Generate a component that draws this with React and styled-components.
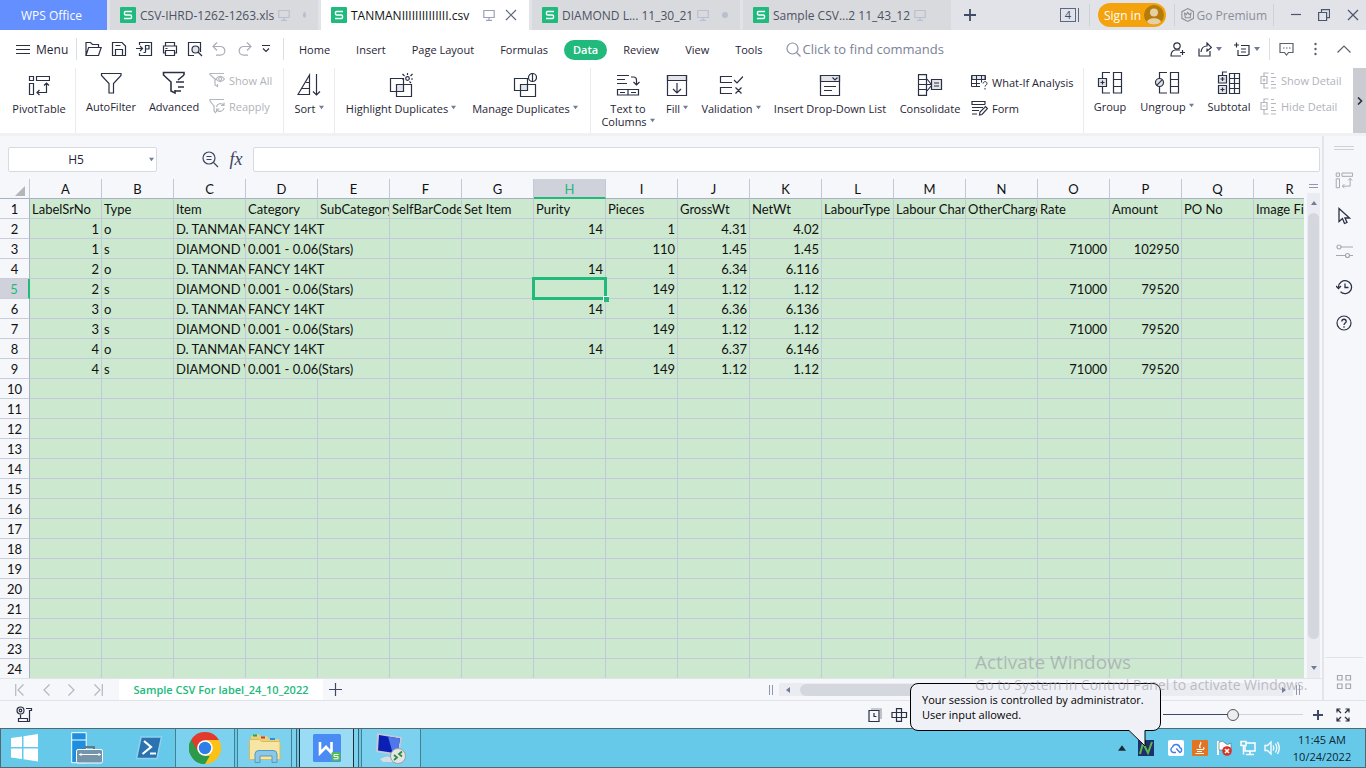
import styled, { createGlobalStyle, css } from 'styled-components';

const GlobalStyle = createGlobalStyle`
  *, *::before, *::after {
    box-sizing: border-box;
  }
  body {
    margin: 0;
    font-family: 'Open Sans', 'Noto Sans', sans-serif;
    font-size: 12px;
    color: #1f2536;
    background: #f5f7fa;
  }
  button, input {
    font: inherit;
    color: inherit;
    margin: 0;
    padding: 0;
    border: 0;
    background: none;
  }
  a {
    color: inherit;
    text-decoration: none;
  }
`;

/* ---------- icons ---------- */

const Svg = ({ w, h, color = '#2b3144', children }) => (
  <svg
    width={w}
    height={h}
    viewBox={`0 0 ${w} ${h}`}
    fill="none"
    stroke={color}
    strokeWidth="1.2"
    aria-hidden="true"
  >
    {children}
  </svg>
);

const SheetLogo = () => (
  <svg width="16" height="16" viewBox="0 0 16 16" fill="none" aria-hidden="true">
    <rect width="16" height="16" rx="1" fill="#1fba7d" />
    <path d="M12 4.5H5.5a1 1 0 0 0-1 1V7a1 1 0 0 0 1 1h5a1 1 0 0 1 1 1v1.5a1 1 0 0 1-1 1H4" stroke="#fff" strokeWidth="1.4" />
  </svg>
);

const MonitorIcon = ({ color = '#b9bfd0' }) => (
  <Svg w={12} h={12} color={color}>
    <path d="M.8 1.5h10.4v7H.8zM6 8.5V11M3 11.4h6" />
  </Svg>
);

const CloseIcon = ({ color = '#5e6780' }) => (
  <Svg w={12} h={12} color={color}>
    <path d="M1 1l10 10M11 1L1 11" />
  </Svg>
);

const PlusIcon = ({ size = 12, color = '#3f4a66', weight = 1.4 }) => (
  <Svg w={size} h={size} color={color}>
    <path d={`M${size / 2} 0v${size}M0 ${size / 2}h${size}`} strokeWidth={weight} />
  </Svg>
);

const HamburgerIcon = () => (
  <Svg w={14} h={11}>
    <path d="M0 1.5h14M0 5.5h14M0 9.5h14" strokeWidth="1" />
  </Svg>
);

const OpenIcon = () => (
  <Svg w={17} h={16}>
    <path d="M1 14.5v-13h4.5l2 2h6v3M1 14.5l2.6-8h12.6l-2.7 8z" />
  </Svg>
);

const SaveIcon = () => (
  <Svg w={16} h={16}>
    <path d="M1.5 1.5h9.5l3.5 3.5v9.5h-13zM4.5 14.5V8.5h7v6M4.5 4.5h5" />
  </Svg>
);

const ExportIcon = () => (
  <Svg w={17} h={16}>
    <path d="M3.5 4V1.5h12v13h-12V12M0 7.500h6M4 5l2.500 2.500L4 10M9.500 11.500v-7h3.500v3.500H9.500M7.500 11.500h2" />
  </Svg>
);

const PrintIcon = () => (
  <Svg w={16} h={16}>
    <path d="M3.5 5V1.500h9V5M3.500 12H1.500V5h13v7h-2M3.500 9.500h9v5h-9zM3.500 7.500h2" />
  </Svg>
);

const PreviewIcon = () => (
  <Svg w={16} h={16}>
    <path d="M7 14.5H1.500v-13h12V11" />
    <circle cx="8.5" cy="8.5" r="3.5" fill="#e3e5ea" />
    <path d="M11 11l4 4" />
  </Svg>
);

const UndoIcon = ({ flip }) => (
  <Svg w={16} h={14} color="#a9adb8">
    <g transform={flip ? 'matrix(-1 0 0 1 15 0)' : undefined}>
      <path d="M5 .5L1 4.5l4 4M1 4.5h7.500a4.300 4.300 0 0 1 0 8.700H4" />
    </g>
  </Svg>
);

const MoreIcon = () => (
  <Svg w={8} h={8}>
    <path d="M0 .5h8M1 3.500l3 3 3-3" />
  </Svg>
);

const SearchIcon = () => (
  <Svg w={15} h={15} color="#8b93a8">
    <circle cx="6.5" cy="6.5" r="5.5" />
    <path d="M10.5 10.5l4 4" />
  </Svg>
);

const PivotIcon = ({ size = 22, color = '#2b3144' }) => (
  <svg width={size} height={size} viewBox="0 0 22 22" fill="none" stroke={color} strokeWidth="1.2" aria-hidden="true">
    <path d="M1.5 2.5h4v4h-4zM8.5 2.5h13v4h-13zM1.5 9.5h4v11h-4zM9 18.5h9.500V9M16 11.5L18.500 9l2.500 2.500M11.500 16L9 18.500l2.500 2.500" />
  </svg>
);

const FilterIcon = () => (
  <Svg w={22} h={24}>
    <path d="M1.5 2.500h19.500v2l-7.500 8v9.500H9V12.500L1.500 4.500z" />
  </Svg>
);

const AdvancedFilterIcon = () => (
  <Svg w={24} h={24}>
    <path d="M22 4V1.500H1.500V4l7.500 7v9l4 2v-3M22 4l-6 5M14 11h8M16 16h6M13 20h6" strokeWidth="1.6" />
  </Svg>
);

const ShowAllIcon = () => (
  <Svg w={16} h={16} color="#b4b7bf">
    <path d="M7 8L1 2.500v-1h14M6 7v6l2.500 1.500V12M7 7c2.500-3.500 6-3.500 8.500 0-2.500 3.500-6 3.500-8.500 0z" />
    <circle cx="11.2" cy="7" r="1.5" />
  </Svg>
);

const ReapplyIcon = () => (
  <Svg w={16} h={16} color="#b4b7bf">
    <path d="M5 8L1 3V1.500h14M5 7v6l2 2M7.500 9a4 4 0 0 1 7-2M15 4.500v3h-3M15 10a4 4 0 0 1-7 2M7.500 14v-3h3" />
  </Svg>
);

const SortIcon = () => (
  <Svg w={24} h={24}>
    <path d="M1 21.500L12.500 2v19.500zM5 15.500h7.500M9 9.500h3.500M19.500 1v21M16 18.500l3.500 3.500 3.500-3.500" />
  </Svg>
);

const HighlightIcon = () => (
  <Svg w={24} h={24}>
    <path d="M8 12h7v6H8z" fill="#e3e5ea" stroke="none" />
    <path d="M1.5 5.5h13v13h-13zM7.5 11.500h15v12h-15z" />
    <circle cx="18.500" cy="5.500" r="1.800" fill="#fff" />
    <path d="M18.500 0v2M13.500 1l2 2M23.500 1l-2 2M22 6h2M13 6h2M22 10l-1.500-1.500" />
  </Svg>
);

const ManageIcon = () => (
  <Svg w={24} h={24}>
    <path d="M8 12h6v6H8z" fill="#e3e5ea" stroke="none" />
    <path d="M1.5 5.5h13v12h-13zM7.5 11.500h15v12h-15z" />
    <circle cx="19.5" cy="4.500" r="4" fill="#fff" />
    <path d="M19.500 .500v8" />
  </Svg>
);

const ColumnsIcon = () => (
  <Svg w={24} h={22}>
    <path d="M1 1.500h12M1 5.500h8M1 9.500h10M15 3h2.500a3 3 0 0 1 3 3v4M17.500 8l3 3 3-3M1.500 15.500h21v5.500h-21zM12 15.500v5.500M4 18.500h5M15 18.500h5" />
  </Svg>
);

const FillIcon = () => (
  <Svg w={22} h={23}>
    <path d="M1.500 1.500h19v5h-19z" fill="#e3e5ea" />
    <path d="M1.500 1.500h19v20h-19zM11 9v10M7 15l4 4 4-4" />
  </Svg>
);

const ValidationIcon = () => (
  <Svg w={24} h={20}>
    <path d="M13 1.500H1.500v6H13M13 12.500H1.500v6H13M15 5l3 3 6-6.500M16.500 12.500l6 6M22.500 12.500l-6 6" />
  </Svg>
);

const DropListIcon = () => (
  <Svg w={22} h={23}>
    <path d="M1.500 1.500h19v6h-19z" fill="#e3e5ea" />
    <path d="M1.500 1.500h19v20h-19zM13.500 3.500L16 6l2.500-2.500M5 12.500h12M5 16.500h8" />
  </Svg>
);

const ConsolidateIcon = () => (
  <Svg w={26} h={22}>
    <path d="M1.500 .600h8v20.800h-8zM1.500 5.500h8M1.500 10.500h8M1.500 15.500h8M10 5l4 5M10 17l4-5M10 10.500h4" />
    <path d="M14.500 5.500h10v10h-10z" fill="#e3e5ea" />
    <path d="M17 9h5M17 12h5" />
  </Svg>
);

const WhatIfIcon = () => (
  <svg width="17" height="16" viewBox="0 0 17 16" fill="none" stroke="#2b3144" aria-hidden="true">
    <path d="M1 1.500h13v4H1z" fill="#e3e5ea" />
    <path d="M14.500 6V1.500h-14v11H9M.500 5.500h14M.500 9.500H9M5.500 1.500v11M10.500 1.500v7M12 9.500c0-2.500 4-2.500 4 0 0 1.500-2 1.500-2 3M14 14v1.500" />
  </svg>
);

const FormIcon = () => (
  <Svg w={17} h={16}>
    <path d="M14 4.500v-3H1v3h13M1 7.500h11M1 10.500h7M1 14h5M8.500 15l.500-3 5.500-5.500 2 2L11 14.500z" />
  </Svg>
);

const GroupIcon = ({ ungroup }) => (
  <Svg w={26} h={24}>
    <path d="M16.500 1.500h8v20.500h-8zM16.500 8.500h8M16.500 15.500h8M13 1.500H5.500V7M5.500 16v6H13" />
    {ungroup ? (
      <>
        <circle cx="5.500" cy="11.500" r="4" fill="#e3e5ea" />
        <path d="M2.700 14.300l5.600-5.600" />
      </>
    ) : (
      <>
        <path d="M1.500 7.500h8v8h-8z" fill="#e3e5ea" />
        <path d="M5.500 9.500v4M3.500 11.500h4" />
      </>
    )}
  </Svg>
);

const SubtotalIcon = () => (
  <Svg w={24} h={24}>
    <path d="M12.500 2.500h10v20h-10zM17.500 2.500v20M12.500 7.500h10M12.500 12.500h10M12.500 17.500h10M10 1H5.500v3" />
    <path d="M1.500 4.500h8v7.500h-8zM1.500 14.500h8v8h-8z" fill="#e3e5ea" />
    <path d="M5.500 6v4M3.500 8h4M5.500 16.500v4M3.500 18.500h4" />
  </Svg>
);

const DetailIcon = ({ plus }) => (
  <Svg w={17} h={17} color="#b4b7bf">
    <path d="M8.500 1H4v3.500M4 11.500V16h4.500M1 4.500h6v7H1zM2.500 8h3M11 1.500h3M11 5.500h5M11 9.500h3M11 12.500h5M11 16h5" />
    {plus && <path d="M4 6.500v3" />}
  </Svg>
);

const AddUserIcon = () => (
  <Svg w={15} h={15}>
    <circle cx="7" cy="4" r="3.2" />
    <path d="M10 8H5c-3 .500-4 3-4 6h10M12.500 8v5M10 10.500h5" />
  </Svg>
);

const ShareIcon = () => (
  <Svg w={15} h={15}>
    <path d="M2 6.500v7.500h11V9M4 10c.500-4 3-6 6-6V1l4.500 4.500L10 9V6.500" />
  </Svg>
);

const NewNoteIcon = () => (
  <Svg w={16} h={14}>
    <path d="M7 3.500h8v9l-2 1H4V8M0 3h5M2.500 .500v5M7 7h5M7 10h5" />
  </Svg>
);

const CommentIcon = () => (
  <Svg w={15} h={14} color="#5a6070">
    <path d="M1 1.500h13v9H9.500l-2 2.500-2-2.500H1zM4 6h1.500M7 6h1.500M10 6h1.500" />
  </Svg>
);

const DotsIcon = () => (
  <svg width="3" height="14" viewBox="0 0 3 14" fill="#5a6070" aria-hidden="true">
    <circle cx="1.5" cy="2" r="1.2" />
    <circle cx="1.5" cy="7" r="1.2" />
    <circle cx="1.5" cy="12" r="1.2" />
  </svg>
);

const ChevronUpIcon = () => (
  <Svg w={14} h={8} color="#5a6070">
    <path d="M.5 7.5L7 1l6.500 6.500" />
  </Svg>
);

const ZoomFxIcon = () => (
  <Svg w={17} h={17} color="#3c4560">
    <circle cx="7" cy="7" r="6" />
    <path d="M11.500 11.500l4.500 4.500M4.500 5.500h5M4.500 8.500h5" />
  </Svg>
);

const NavIcon = ({ last, bar }) => (
  <Svg w={10} h={14} color="#b4b7bf">
    <g transform={last ? 'matrix(-1 0 0 1 10 0)' : undefined}>
      <path d="M8.500 1.500L3 7l5.500 5.500" />
      {bar && <path d="M.700 1v12" />}
    </g>
  </Svg>
);

const triangles = {
  down: 'M0 1h6L3 5z',
  up: 'M0 5h6L3 1z',
  left: 'M5 0v6L1 3z',
  right: 'M1 0v6l4-3z',
};

const Triangle = ({ dir = 'down', color = '#6f7b98', w = 6 }) => (
  <svg width={w} height={w} viewBox="0 0 6 6" fill={color} aria-hidden="true">
    <path d={triangles[dir]} />
  </svg>
);

/* ---------- title bar ---------- */

const Page = styled.div`
  position: relative;
  display: flex;
  flex-direction: column;
  min-height: 100vh;
`;

const IconButton = styled.button`
  display: flex;
  flex: none;
  align-items: center;
  justify-content: center;
  gap: 4px;
`;

const TitleBar = styled.header`
  display: flex;
  align-items: center;
  height: 30px;
  background: #e2e3e8;
`;

const HomeTab = styled.button`
  width: 107px;
  height: 30px;
  margin-right: 3px;
  padding-right: 4px;
  background: #638fff;
  color: #fff;
`;

const FileTab = styled.div`
  display: flex;
  align-items: center;
  width: 208px;
  height: 30px;
  margin-right: 3px;
  padding: 0 12px 0 10px;
  gap: 4px;
  background: ${(p) => (p.$active ? '#fff' : '#d9dade')};
  color: ${(p) => (p.$active ? '#111' : '#4d5263')};

  span {
    flex: 1;
    white-space: nowrap;
  }
  svg {
    flex: none;
  }
  svg + button {
    margin-left: 6px;
  }
`;

const Dot = styled.i`
  width: 6px;
  height: 6px;
  margin-left: ${(p) => (p.$hidden ? 6 : 9)}px;
  border-radius: 50%;
  background: ${(p) => (p.$hidden ? 'transparent' : '#b9bfd0')};
`;

const NewTab = styled(IconButton)`
  margin-left: 10px;
`;

const WindowTools = styled.div`
  display: flex;
  align-items: center;
  margin-left: auto;
  height: 30px;
  padding-right: 7px;
`;

const WindowButtons = styled.div`
  display: flex;
  align-items: center;
  gap: 17px;
`;

const VLine = styled.i`
  width: 1px;
  height: 22px;
  margin: ${(p) => p.$m || '0'};
  background: ${(p) => p.$color || '#dcdee4'};
`;

const TabCount = styled.span`
  width: 16px;
  height: 14px;
  border: 1px solid #5b6885;
  text-align: center;
  font-size: 11px;
  line-height: 12px;
  color: #3f4a66;
  box-shadow: 2px 0 0 #e2e3e8, 3px 0 0 #5b6885;
`;

const SignIn = styled.button`
  display: flex;
  align-items: center;
  justify-content: space-between;
  width: 68px;
  height: 24px;
  padding: 0 2px 0 6px;
  border-radius: 12px;
  background: #f5a30c;
  color: #fff;
  white-space: nowrap;
`;

const Premium = styled.a`
  display: flex;
  align-items: center;
  gap: 2px;
  width: 86px;
  color: #8b8e98;
  white-space: nowrap;
`;

/* ---------- menu row ---------- */

const MenuRow = styled.nav`
  display: flex;
  align-items: center;
  height: 38px;
  padding: 0 15px 0 16px;
  background: #fff;
`;

const MenuButton = styled.button`
  display: flex;
  align-items: center;
  gap: 6px;
  width: 60px;
  height: 24px;
`;

const QuickTools = styled.div`
  display: flex;
  align-items: center;
  gap: 9px;
  width: 206px;
  padding-left: 8px;
`;

const MenuTab = styled.button`
  height: 20px;
  margin: 1px 3px 0;
  padding: 0 10px;
  border-radius: 10px;
  white-space: nowrap;
  font-size: 11px;
  ${(p) =>
    p.$active &&
    css`
      padding: 0 9px;
      background: #21ba7c;
      color: #fff;
      font-weight: 600;
    `}
`;

const Search = styled.label`
  display: flex;
  align-items: center;
  margin-left: 10px;
  gap: 2px;

  input {
    width: 160px;
    font-size: 13px;
    outline: 0;
  }
  input::placeholder {
    color: #7a8296;
    opacity: 1;
  }
`;

const MenuRight = styled.div`
  display: flex;
  align-items: center;
  margin-left: auto;
  gap: 12px;
`;

const MenuExtras = styled.div`
  display: flex;
  align-items: center;
  gap: 20px;
`;

/* ---------- ribbon ---------- */

const Ribbon = styled.div`
  display: flex;
  height: 68px;
  background: #fff;
  border-bottom: 3px solid #f0f1f3;
`;

const RibbonGroup = styled.div`
  display: flex;
  padding: ${(p) => p.$pad || '0'};
  border-right: 1px solid #ebecef;

  &:last-of-type {
    border-right: 0;
  }
`;

const RibbonItem = styled.button`
  display: flex;
  flex-direction: column;
  align-items: center;
  width: ${(p) => p.$w}px;
  height: 65px;
  padding-top: ${(p) => (p.$high ? 2 : 4)}px;
  font-size: 11px;
  line-height: 13px;
  white-space: nowrap;

  .pic {
    display: flex;
    align-items: center;
    height: 26px;
    margin-bottom: 4px;
  }
  .label svg {
    margin-left: 3px;
    vertical-align: 3px;
  }
`;

const RibbonStack = styled.div`
  display: flex;
  flex-direction: column;
  gap: 8px;
  width: ${(p) => p.$w}px;
  padding: ${(p) => p.$pad || '4px 0 0'};
`;

const SmallItem = styled.button`
  display: flex;
  align-items: center;
  gap: 4px;
  height: 18px;
  white-space: nowrap;
  font-size: 11px;
  color: ${(p) => (p.disabled ? '#b0b3bb' : 'inherit')};
`;

const RibbonScroll = styled.button`
  width: 13px;
  height: 65px;
  margin-left: auto;
  background: #cbccd2;
`;

const Tool = ({ icon, label, w, high, arrow }) => (
  <RibbonItem $w={w} $high={high}>
    <span className="pic">{icon}</span>
    <span className="label">
      {label}
      {arrow && <Triangle w={5} />}
    </span>
  </RibbonItem>
);

/* ---------- work area ---------- */

const Work = styled.div`
  display: flex;
  flex: 1;
`;

const Main = styled.main`
  display: flex;
  flex: 1;
  flex-direction: column;
  min-width: 0;
`;

const FormulaBar = styled.div`
  display: flex;
  align-items: center;
  height: 43px;
  padding: 3px 2px 0 8px;
`;

const field = css`
  height: 25px;
  border: 1px solid #d8dae1;
  border-radius: 2px;
  background: #fff;
`;

const NameBox = styled.label`
  ${field}
  display: flex;
  align-items: center;
  width: 149px;
  margin-right: 45px;
  padding-right: 2px;

  input {
    flex: 1;
    min-width: 0;
    padding-right: 6px;
    text-align: center;
    outline: 0;
  }
`;

const Fx = styled.button`
  width: 34px;
  font-family: 'Liberation Serif', serif;
  font-size: 18px;
  font-style: italic;
  line-height: 20px;
  color: #3c4560;
`;

const FormulaInput = styled.input`
  ${field}
  flex: 1;
`;

const SheetArea = styled.div`
  display: flex;
  flex: 1;
`;

const Clip = styled.div`
  flex: 1;
  min-width: 0;
  overflow: hidden;
  background: #cce8cf;
`;

const Grid = styled.table`
  width: 1326px;
  table-layout: fixed;
  border-collapse: separate;
  border-spacing: 0;
  font-family: Lato, 'Noto Sans', sans-serif;
  font-size: 13px;
  line-height: 17px;
  color: #111;

  th {
    height: 20px;
    padding: 2px 0 0;
    font-weight: 400;
    background: #f5f7fa;
    border-right: 1px solid #a9b0c6;
    border-bottom: 1px solid #c9cdda;
  }
  thead th {
    border-bottom-color: #a9b0c6;
    border-right-color: #c3c8d6;
  }
  tr > th:first-child {
    width: 30px;
  }
`;

const ColHead = styled.th`
  && {
    ${(p) =>
      p.$on &&
      css`
        background: #cfd2da;
        color: #21ba7c;
        border-bottom: 2px solid #21ba7c;
        line-height: 16px;
      `}
  }
`;

const RowHead = styled.th`
  && {
    ${(p) =>
      p.$on &&
      css`
        background: #cfd2da;
        color: #21ba7c;
        border-right: 2px solid #21ba7c;
      `}
  }
`;

const Cell = styled.td`
  position: relative;
  height: 20px;
  padding: 2px 2px 0;
  overflow: ${(p) => (p.$selected ? 'visible' : 'hidden')};
  white-space: nowrap;
  text-align: ${(p) => (p.$num ? 'right' : 'left')};
  background: #cce8cf;
  border-right: 1px solid #c0c9d6;
  border-bottom: 1px solid #c3c8dc;
`;

const Selection = styled.i`
  position: absolute;
  z-index: 1;
  inset: -2px;
  border: 3px solid #21ba7c;

  &::after {
    content: '';
    position: absolute;
    right: -5px;
    bottom: -5px;
    width: 6px;
    height: 6px;
    background: #21ba7c;
    border: solid #fff;
    border-width: 1px 0 0 1px;
  }
`;

const Corner = styled.svg`
  display: block;
  margin: 3px 4px 0 auto;
`;

const VScroll = styled.div`
  display: flex;
  flex-direction: column;
  align-items: center;
  width: 13px;
  margin: 0 2px 0 3px;
  padding-bottom: 8px;
  background: #ebecf1;
`;

const Splitter = styled.i`
  width: 13px;
  height: 14px;
  margin-bottom: 7px;
  border: solid #f5f7fa;
  border-width: 5px 2px 5px;
  background: linear-gradient(#8f98b0 1px, #f5f7fa 1px 3px, #8f98b0 3px);
`;

const VThumb = styled.i`
  flex: 1;
  width: 11px;
  margin: 7px 0 26px;
  border-radius: 6px;
  background: #d5d7df;
`;

const SheetTabs = styled.div`
  position: relative;
  display: flex;
  align-items: center;
  height: 22px;
  margin-top: -1px;
  padding: 0 22px 0 15px;
  background: #f5f7fa;
  border-top: 1px solid #e1e3ea;
`;

const SheetNav = styled.div`
  display: flex;
  justify-content: space-between;
  width: 88px;
  margin-right: 16px;
`;

const SheetTab = styled.button`
  align-self: stretch;
  min-width: 204px;
  margin-right: 6px;
  background: #fff;
  color: #21ba7c;
  font-size: 11px;
  font-weight: 600;
  white-space: nowrap;
`;

const HScroll = styled.div`
  display: flex;
  align-items: center;
  width: 514px;
  height: 13px;
  margin: 0 3px 0 6px;
  padding: 0 6px;
  background: #ebecf1;

  i {
    flex: 1;
    height: 12px;
    margin: 0 180px 0 9px;
    border-radius: 6px;
    background: #d5d7df;
  }
`;

const Grip = styled.i`
  width: 4px;
  height: 10px;
  border: solid #8f98b0;
  border-width: 0 1px;

  &:first-of-type {
    margin-left: auto;
  }
`;

const SidePane = styled.aside`
  display: flex;
  flex-direction: column;
  align-items: center;
  width: 44px;
  padding: 10px 2px 0 0;
  border-left: 2px solid #e4e5ec;

  hr {
    width: 20px;
    height: 4px;
    margin: 0 0 21px;
    border: solid #cfd1d8;
    border-width: 1px 0;
  }
  button {
    height: 18px;
    margin-bottom: 18px;
  }
  div {
    width: 38px;
    margin-top: auto;
    padding: 16px 11px 0;
    border-top: 1px solid #e1e3ea;
  }
  div button {
    margin-bottom: 8px;
  }
`;

/* ---------- status bar ---------- */

const StatusBar = styled.footer`
  display: flex;
  align-items: center;
  height: 28px;
  padding: 0 16px;
  border-top: 1px solid #e1e3ea;
`;

const StatusTools = styled.div`
  display: flex;
  align-items: center;
  gap: 9px;
  margin: 0 246px 0 auto;

  svg:last-child {
    margin-left: -5px;
  }
`;

const ZoomSlider = styled.input`
  appearance: none;
  width: 140px;
  height: 14px;
  margin-right: 10px;
  background: linear-gradient(90deg, #3f4a66 50%, #d0d2d9 50%) center / 100% 1px no-repeat;

  &::-webkit-slider-thumb {
    appearance: none;
    width: 12px;
    height: 12px;
    border: 1px solid #55585f;
    border-radius: 50%;
    background: #eee;
  }
`;

const FullScreen = styled(IconButton)`
  margin-left: 13px;
`;

/* ---------- taskbar ---------- */

const Taskbar = styled.div`
  display: flex;
  height: 40px;
  background: #66c9ea;
  border: 1px solid #57666e;
`;

const TaskButton = styled.button`
  display: flex;
  align-items: center;
  justify-content: center;
  width: 60px;
  margin-right: 2px;
  ${(p) =>
    p.$open &&
    css`
      background: ${p.$active ? '#9adcf3' : '#7bd1ee'};
      border: solid ${p.$active ? '#1e2e36' : '#45808f'};
      border-width: 0 1px;
    `}
  ${(p) =>
    p.$stack &&
    css`
      width: 55px;
      margin-right: 7px;
      box-shadow: 4px 0 0 #7bd1ee, 5px 0 0 #3d6470;
    `}
`;

const Launchers = styled.div`
  display: flex;
  gap: 14px;
  width: 174px;

  button {
    width: 48px;
    margin: 0;
  }
`;

const Tray = styled.div`
  display: flex;
  align-items: center;
  gap: 8px;
  margin-left: auto;
  padding-right: 13px;
`;

const SessionIcon = styled.svg`
  margin: 0 6px 0 4px;
`;

const Clock = styled.time`
  width: 60px;
  margin-left: 4px;
  text-align: center;
  font-size: 11px;
  line-height: 17px;
  white-space: nowrap;
  color: #0d2530;
`;

const Balloon = styled.div`
  position: absolute;
  z-index: 2;
  right: 205px;
  bottom: 37px;
  width: 251px;
  height: 48px;
  padding: 8px 11px;
  border: 1px solid #000;
  border-radius: 8px;
  background: #f0f1f7;
  color: #000;
  font-size: 11px;
  line-height: 15px;
  white-space: nowrap;

  svg {
    position: absolute;
    right: 13px;
    top: 46px;
  }
`;

const Watermark = styled.div`
  position: absolute;
  z-index: 3;
  right: 52px;
  bottom: 72px;
  min-width: 339px;
  color: rgba(150, 152, 158, 0.6);
  font-size: 14px;
  line-height: 22px;
  white-space: nowrap;
  pointer-events: none;

  strong {
    display: block;
    font-size: 19px;
    font-weight: 400;
    line-height: 24px;
  }
`;

/* ---------- data ---------- */

const fileTabs = [
  { name: 'CSV-IHRD-1262-1263.xls' },
  { name: 'TANMANIIIIIIIIIIIIII.csv', active: true },
  { name: 'DIAMOND L... 11_30_21' },
  { name: 'Sample CSV...2 11_43_12', saved: true },
];

const menuTabs = ['Home', 'Insert', 'Page Layout', 'Formulas', 'Data', 'Review', 'View', 'Tools'];

const letters = 'ABCDEFGHIJKLMNOPQR'.split('');

const headings = [
  'LabelSrNo', 'Type', 'Item', 'Category', 'SubCategory', 'SelfBarCode', 'Set Item', 'Purity', 'Pieces',
  'GrossWt', 'NetWt', 'LabourType', 'Labour Char', 'OtherCharge', 'Rate', 'Amount', 'PO No', 'Image Fi',
];

const pair = (n, gross, net, pieces, ct, amount) => [
  { A: n, B: 'o', C: 'D. TANMAN', D: 'FANCY 14KT', H: 14, I: 1, J: gross, K: net },
  { A: n, B: 's', C: 'DIAMOND V', D: '0.001 - 0.06(Stars)', I: pieces, J: ct, K: ct, O: 71000, P: amount },
];

const rows = [
  ...pair(1, 4.31, 4.02, 110, 1.45, 102950),
  ...pair(2, 6.34, 6.116, 149, 1.12, 79520),
  ...pair(3, 6.36, 6.136, 149, 1.12, 79520),
  ...pair(4, 6.37, 6.146, 149, 1.12, 79520),
];

const emptyRows = Array.from({ length: 15 }, (_, i) => i + 10);

const Sheet = () => (
  <Grid>
    <thead>
      <tr>
        <th aria-label="Select all">
          <Corner width="10" height="10" viewBox="0 0 10 10">
            <path d="M10 0v10H0z" fill="#b3b5bb" />
          </Corner>
        </th>
        {letters.map((l) => (
          <ColHead key={l} $on={l === 'H'}>
            {l}
          </ColHead>
        ))}
      </tr>
    </thead>
    <tbody>
      <tr>
        <RowHead>1</RowHead>
        {headings.map((h) => (
          <Cell key={h}>{h}</Cell>
        ))}
      </tr>
      {rows.map((row, i) => (
        <tr key={i}>
          <RowHead $on={i === 3}>{i + 2}</RowHead>
          {letters
            .filter((l) => l !== 'E')
            .map((l) => {
              const selected = i === 3 && l === 'H';
              return (
                <Cell
                  key={l}
                  colSpan={l === 'D' ? 2 : 1}
                  $num={typeof row[l] === 'number'}
                  $selected={selected}
                >
                  {row[l]}
                  {selected && <Selection />}
                </Cell>
              );
            })}
        </tr>
      ))}
      {emptyRows.map((n) => (
        <tr key={n}>
          <RowHead>{n}</RowHead>
          {letters.map((l) => (
            <Cell key={l} />
          ))}
        </tr>
      ))}
    </tbody>
  </Grid>
);

const Title = () => (
  <TitleBar>
    <HomeTab>WPS Office</HomeTab>
    {fileTabs.map((t) => (
      <FileTab key={t.name} $active={t.active}>
        <SheetLogo />
        <span>{t.name}</span>
        <MonitorIcon color={t.active ? '#9aa2b8' : undefined} />
        {t.active ? (
          <IconButton aria-label="Close">
            <CloseIcon />
          </IconButton>
        ) : (
          <Dot $hidden={t.saved} />
        )}
      </FileTab>
    ))}
    <NewTab aria-label="New tab">
      <PlusIcon weight={1.8} />
    </NewTab>
    <WindowTools>
      <TabCount>4</TabCount>
      <VLine $m="0 8px 0 13px" $color="#cfd1d8" />
      <SignIn>
        Sign in
        <svg width="20" height="20" viewBox="0 0 20 20" aria-hidden="true">
          <circle cx="10" cy="10" r="10" fill="#b57b0b" />
          <circle cx="10" cy="7.5" r="4" fill="#e6cfa3" />
          <path d="M3 17c1-5 13-5 14 0a10 10 0 0 1-14 0z" fill="#e6cfa3" />
        </svg>
      </SignIn>
      <VLine $m="0 6px 0 8px" $color="#cfd1d8" />
      <Premium href="#">
        <Svg w={15} h={16} color="#8b8e98">
          <path d="M7.500 .800l6.500 3.500v7.400l-6.500 3.500L1 11.700V4.300z" />
          <path d="M4 6l2 1.500L7.500 5 9 7.500 11 6l-.800 5H4.800z" />
        </Svg>
        Go Premium
      </Premium>
      <VLine $m="0 17px 0 6px" $color="#cfd1d8" />
      <WindowButtons>
        <IconButton aria-label="Minimize">
          <Svg w={10} h={12} color="#4a5570">
            <path d="M0 5.500h10" />
          </Svg>
        </IconButton>
        <IconButton aria-label="Restore">
          <Svg w={12} h={12} color="#4a5570">
            <path d="M.600 3.500h8v8h-8zM3.500 3V.600h8v8H9" />
          </Svg>
        </IconButton>
        <IconButton aria-label="Close window">
          <CloseIcon color="#4a5570" />
        </IconButton>
      </WindowButtons>
    </WindowTools>
  </TitleBar>
);

const Menu = () => (
  <MenuRow>
    <MenuButton>
      <HamburgerIcon />
      Menu
    </MenuButton>
    <VLine />
    <QuickTools>
      <IconButton aria-label="Open"><OpenIcon /></IconButton>
      <IconButton aria-label="Save"><SaveIcon /></IconButton>
      <IconButton aria-label="Export to PDF"><ExportIcon /></IconButton>
      <IconButton aria-label="Print"><PrintIcon /></IconButton>
      <IconButton aria-label="Print preview"><PreviewIcon /></IconButton>
      <IconButton aria-label="Undo"><UndoIcon /></IconButton>
      <IconButton aria-label="Redo"><UndoIcon flip /></IconButton>
      <IconButton aria-label="More"><MoreIcon /></IconButton>
    </QuickTools>
    <VLine $m="0 2px 0 0" />
    {menuTabs.map((t) => (
      <MenuTab key={t} $active={t === 'Data'}>
        {t}
      </MenuTab>
    ))}
    <Search>
      <SearchIcon />
      <input type="search" placeholder="Click to find commands" aria-label="Click to find commands" />
    </Search>
    <MenuRight>
      <IconButton aria-label="Invite"><AddUserIcon /></IconButton>
      <IconButton aria-label="Share"><ShareIcon /><Triangle /></IconButton>
      <IconButton aria-label="Notes"><NewNoteIcon /><Triangle /></IconButton>
      <VLine $m="0 -3px 0 -3px" />
      <MenuExtras>
        <IconButton aria-label="Comments"><CommentIcon /></IconButton>
        <IconButton aria-label="Options"><DotsIcon /></IconButton>
        <IconButton aria-label="Collapse"><ChevronUpIcon /></IconButton>
      </MenuExtras>
    </MenuRight>
  </MenuRow>
);

const DataRibbon = () => (
  <Ribbon>
    <RibbonGroup $pad="0 0 0 3px">
      <Tool w={72} icon={<PivotIcon />} label="PivotTable" />
    </RibbonGroup>
    <RibbonGroup $pad="0 0 0 3px">
      <Tool high w={64} icon={<FilterIcon />} label="AutoFilter" />
      <Tool high w={62} icon={<AdvancedFilterIcon />} label="Advanced" />
      <RibbonStack $w={78} $pad="3px 0 0 4px">
        <SmallItem disabled><ShowAllIcon />Show All</SmallItem>
        <SmallItem disabled><ReapplyIcon />Reapply</SmallItem>
      </RibbonStack>
    </RibbonGroup>
    <RibbonGroup>
      <Tool w={50} icon={<SortIcon />} label="Sort" arrow />
    </RibbonGroup>
    <RibbonGroup $pad="0 3px 0 4px">
      <Tool w={124} icon={<HighlightIcon />} label="Highlight Duplicates" arrow />
      <Tool w={124} icon={<ManageIcon />} label="Manage Duplicates" arrow />
    </RibbonGroup>
    <RibbonGroup $pad="0 0 0 6px">
      <Tool w={62} icon={<ColumnsIcon />} label={<>Text to<br />Columns</>} arrow />
      <Tool w={36} icon={<FillIcon />} label="Fill" arrow />
      <Tool w={72} icon={<ValidationIcon />} label="Validation" arrow />
      <Tool w={126} icon={<DropListIcon />} label="Insert Drop-Down List" />
      <Tool w={74} icon={<ConsolidateIcon />} label="Consolidate" />
      <RibbonStack $w={116} $pad="5px 0 0 4px">
        <SmallItem><WhatIfIcon />What-If Analysis</SmallItem>
        <SmallItem><FormIcon />Form</SmallItem>
      </RibbonStack>
    </RibbonGroup>
    <RibbonGroup>
      <Tool high w={52} icon={<GroupIcon />} label="Group" />
      <Tool high w={62} icon={<GroupIcon ungroup />} label="Ungroup" arrow />
      <Tool high w={62} icon={<SubtotalIcon />} label="Subtotal" />
      <RibbonStack $w={84} $pad="3px 0 0">
        <SmallItem disabled><DetailIcon plus />Show Detail</SmallItem>
        <SmallItem disabled><DetailIcon />Hide Detail</SmallItem>
      </RibbonStack>
    </RibbonGroup>
    <RibbonScroll aria-label="Scroll ribbon">
      <Svg w={6} h={8}>
        <path d="M1 .5L4.500 4 1 7.500" strokeWidth="1.6" />
      </Svg>
    </RibbonScroll>
  </Ribbon>
);

const Side = () => (
  <SidePane>
    <hr />
    <button aria-label="Pivot pane"><PivotIcon size={18} color="#a4a7b0" /></button>
    <button aria-label="Select">
      <Svg w={14} h={18}>
        <path d="M2 1.500v13l3.500-3 2 5 2.500-1-2-4.500h4.500z" strokeWidth="1.3" />
      </Svg>
    </button>
    <button aria-label="Properties">
      <Svg w={17} h={16} color="#a4a7b0">
        <circle cx="3" cy="4" r="2" />
        <circle cx="11.5" cy="12.500" r="2" />
        <path d="M5 4h12M0 12.500h9.500M13.500 12.500H17" />
      </Svg>
    </button>
    <button aria-label="History">
      <Svg w={17} h={16}>
        <path d="M2.500 8a6.500 6.500 0 1 1 2 4.800M0 7l2.500 2.500L5 7M9 4.500v4h3.500" strokeWidth="1.3" />
      </Svg>
    </button>
    <button aria-label="Help">
      <Svg w={16} h={16}>
        <circle cx="8" cy="8" r="7" />
        <path d="M5.800 6.500c0-3 4.400-3 4.400 0 0 1.500-2.200 1.700-2.200 3.500M8 11.300v1.400" strokeWidth="1.3" />
      </Svg>
    </button>
    <div>
      <button aria-label="All panes">
        <Svg w={16} h={16} color="#a4a7b0">
          <path d="M1.500 1.500H6V6H1.500zM10 1.500h4.500V6H10zM1.500 10H6v4.500H1.500zM10 10h4.500v4.500H10z" />
        </Svg>
      </button>
    </div>
  </SidePane>
);

const Status = () => (
  <StatusBar>
    <IconButton aria-label="Record macro">
      <Svg w={17} h={17}>
        <circle cx="4.5" cy="4.500" r="3.5" />
        <circle cx="4.5" cy="4.500" r="1.3" />
        <path d="M10 2.500h5.500v2h-2v11h-11v-3h9v3M4.500 8.500v4" />
      </Svg>
    </IconButton>
    <StatusTools>
      <Svg w={14} h={14}>
        <path d="M3 1h10v10" stroke="#9a9da6" />
        <path d="M1 2.500h10v11H1zM6 5v3.500h2.500" />
      </Svg>
      <Svg w={17} h={14}>
        <path d="M5.500 .700h5v12.600h-5zM1 4.500h14.500v5H1z" />
      </Svg>
      <Triangle w={5} />
    </StatusTools>
    <ZoomSlider type="range" aria-label="Zoom" min="0" max="100" defaultValue="50" />
    <IconButton aria-label="Zoom in">
      <PlusIcon size={10} weight={2} />
    </IconButton>
    <FullScreen aria-label="Full screen">
      <Svg w={14} h={14}>
        <path d="M1 4.500V1h3.500M1 1l4 4M9.500 1H13v3.500M13 1L9 5M1 9.500V13h3.500M1 13l4-4M13 9.500V13H9.500M13 13L9 9" />
      </Svg>
    </FullScreen>
  </StatusBar>
);

const Tasks = () => (
  <Taskbar>
    <Launchers>
      <TaskButton aria-label="Start">
        <svg width="28" height="28" viewBox="0 0 28 28" fill="#fff">
          <path d="M0 4l11-1.600V13H0zM12.500 2.200L27 0v13H12.500zM0 14.500h11V25L0 23.500zM12.500 14.500H27v13l-14.500-2.200z" />
        </svg>
      </TaskButton>
      <TaskButton aria-label="Server Manager">
        <svg width="32" height="32" viewBox="0 0 32 32" stroke="#fff">
          <path d="M.700 .700h14.500v30H.700z" fill="#1e8fde" />
          <path d="M.700 8h14.500" />
          <path d="M14 18v-3h9v3" fill="none" strokeWidth="2" stroke="#5c7c92" />
          <rect x="5.5" y="17.500" width="26" height="13.500" rx="1.5" fill="#7694a9" />
          <path d="M8 22.500h22M10 21v3M28 21v3" />
        </svg>
      </TaskButton>
      <TaskButton aria-label="PowerShell">
        <svg width="28" height="24" viewBox="0 0 28 24" fill="none">
          <path d="M6 1h20.500L22 22.500H1.500z" fill="#2a73b0" stroke="#8fd0ef" strokeWidth="1.5" />
          <path d="M9 5l7 6-8.500 7M15 17.500h6" stroke="#fff" strokeWidth="2.2" />
        </svg>
      </TaskButton>
    </Launchers>
    <TaskButton $open aria-label="Chrome">
      <svg width="32" height="32" viewBox="0 0 32 32">
        <path d="M16 16L29.860 8A16 16 0 0 1 16 32z" fill="#fbc116" />
        <path d="M16 16v16A16 16 0 0 1 2.140 8z" fill="#2c9a48" />
        <path d="M16 8h13.860L23 20z" fill="#fbc116" />
        <path d="M2.140 8L9 20l7-4V8z" fill="#2c9a48" />
        <path d="M2.140 8A16 16 0 0 1 29.860 8H16l-7 4v8z" fill="#e23b2e" />
        <path d="M23 20l-7 12-3-8z" fill="#fbc116" />
        <path d="M9 20l7 4h4.700L16 32A16 16 0 0 1 2.140 8z" fill="#2c9a48" />
        <circle cx="16" cy="16" r="7.8" fill="#fff" />
        <circle cx="16" cy="16" r="6.2" fill="#2f7de9" />
      </svg>
    </TaskButton>
    <TaskButton $open $stack aria-label="File Explorer">
      <svg width="34" height="30" viewBox="0 0 34 30">
        <path d="M3 3l8-2 2 3 6-1 2 3h10v20H3z" fill="#ecd07c" />
        <path d="M5 1.500h4v2H5z" fill="#27a745" />
        <path d="M13 3.500h4v2h-4z" fill="#c93a2b" />
        <path d="M22 5h5v2h-5z" fill="#2b8fe0" />
        <path d="M1.500 6.500h10l2 2H32v18H1.500z" fill="#f7e6a3" stroke="#dcb95a" />
        <path d="M7 29.500V21q0-3.500 4-3.500h14q4 0 4 3.500v8.500h-5V23H12v6.500z" fill="#8cc8e6" stroke="#4f9cc4" />
      </svg>
    </TaskButton>
    <TaskButton $open $active $stack aria-label="WPS">
      <svg width="28" height="28" viewBox="0 0 28 28" fill="none">
        <rect width="28" height="28" rx="1.5" fill="#4b8bf4" />
        <path d="M7 8v11l6-6 5.500 6V8" stroke="#fff" strokeWidth="2.6" />
        <rect x="18.5" y="18" width="9" height="9" rx="1.5" fill="#4fb95b" />
        <path d="M25.500 20.500H21v2h4v2.300h-4.500" stroke="#fff" />
      </svg>
    </TaskButton>
    <TaskButton $open aria-label="Remote Desktop">
      <svg width="32" height="32" viewBox="0 0 32 32">
        <path d="M5 27q8-5 14 0l-2 3H8z" fill="#d9dde2" />
        <path d="M2 1l25 4-3 19L1 20z" fill="#c3cad4" />
        <path d="M4 3l21 3.500-2.500 15L3 18.500z" fill="#0b1fb5" />
        <path d="M13 4.500l12 2-2.500 15-5-1z" fill="#4e78ea" />
        <circle cx="23" cy="24" r="7.5" fill="#e3e5e6" stroke="#9ba1a6" />
        <path d="M19 23l3 2.500-3 2.500M27 19.500L24 22l3 2.500" fill="none" stroke="#2c8e3c" strokeWidth="1.8" />
      </svg>
    </TaskButton>
    <Tray>
      <Triangle dir="up" w={8} color="#1b2c33" />
      <SessionIcon width="16" height="16" viewBox="0 0 16 16" fill="none">
        <rect width="16" height="16" fill="#1f2f6e" />
        <path d="M2 14L5 3l5 10 4-11" stroke="#57b947" strokeWidth="2" />
      </SessionIcon>
      <svg width="16" height="16" viewBox="0 0 16 16" fill="none">
        <rect width="16" height="16" rx="2" fill="#fff" />
        <path d="M8 12.500H5a3 3 0 0 1-.500-5.500 3.800 3.800 0 0 1 7.300.500 2.600 2.600 0 0 1 0 5l-3.500-4" stroke="#3d7df0" strokeWidth="1.4" />
      </svg>
      <svg width="16" height="16" viewBox="0 0 16 16" fill="none">
        <rect width="16" height="16" rx="1" fill="#e37422" />
        <path d="M8.500 2c2 2-3 3 0 6M4.500 9.500h6c2 0 2-2 .500-2M5 11.500h5M3.500 13.500H12" stroke="#fff" strokeWidth="1.2" />
      </svg>
      <svg width="16" height="16" viewBox="0 0 16 16" fill="none">
        <path d="M2 1v14" stroke="#fff" strokeWidth="2" />
        <path d="M3 2q4-2 6 1t6 0v7H3z" fill="#fff" stroke="#4a6873" strokeWidth=".6" />
        <circle cx="11" cy="11" r="4.8" fill="#d93025" />
        <path d="M9 9l4 4M13 9l-4 4" stroke="#fff" strokeWidth="1.6" />
      </svg>
      <svg width="16" height="16" viewBox="0 0 16 16" fill="none" stroke="#fff" strokeWidth="1.5">
        <path d="M5 3h10v8H5zM10 11v3M6 14.500h8" />
        <path d="M1 1.500h5v4H1zM3.500 5.500v9" fill="#66c9ea" />
      </svg>
      <svg width="16" height="16" viewBox="0 0 16 16" fill="none" stroke="#fff" strokeWidth="1.3">
        <path d="M1 5.500h2.500L7 2v12l-3.500-3.500H1z" />
        <path d="M9 5.500q1.500 2.500 0 5M11.500 3.500q2.500 4.500 0 9M13.500 2q3.500 6 0 12" />
      </svg>
      <Clock>
        11:45 AM
        <br />
        10/24/2022
      </Clock>
    </Tray>
  </Taskbar>
);

const App = () => (
  <>
    <GlobalStyle />
    <Page>
      <Title />
      <Menu />
      <DataRibbon />
      <Work>
        <Main>
          <FormulaBar>
            <NameBox>
              <input aria-label="Name box" defaultValue="H5" />
              <Triangle w={5} />
            </NameBox>
            <IconButton aria-label="Evaluate formula">
              <ZoomFxIcon />
            </IconButton>
            <Fx>fx</Fx>
            <FormulaInput aria-label="Formula bar" />
          </FormulaBar>
          <SheetArea>
            <Clip>
              <Sheet />
            </Clip>
            <VScroll>
              <Splitter />
              <Triangle dir="up" />
              <VThumb />
              <Triangle />
            </VScroll>
          </SheetArea>
          <SheetTabs>
            <SheetNav>
              <IconButton aria-label="First sheet"><NavIcon bar /></IconButton>
              <IconButton aria-label="Previous sheet"><NavIcon /></IconButton>
              <IconButton aria-label="Next sheet"><NavIcon last /></IconButton>
              <IconButton aria-label="Last sheet"><NavIcon last bar /></IconButton>
            </SheetNav>
            <SheetTab>Sample CSV For label_24_10_2022</SheetTab>
            <IconButton aria-label="Add sheet">
              <PlusIcon size={13} weight={1.2} />
            </IconButton>
            <Grip />
            <HScroll>
              <Triangle dir="left" />
              <i />
              <Triangle dir="right" />
            </HScroll>
            <Grip />
          </SheetTabs>
        </Main>
        <Side />
      </Work>
      <Status />
      <Tasks />
      <Balloon>
        Your session is controlled by administrator.
        <br />
        User input allowed.
        <svg width="18" height="17" viewBox="0 0 18 17" aria-hidden="true">
          <path d="M0 0v1l16 15V0z" fill="#f0f1f7" />
          <path d="M0 .5L16 16V.5" fill="none" stroke="#000" />
        </svg>
      </Balloon>
      <Watermark>
        <strong>Activate Windows</strong>
        Go to System in Control Panel to activate Windows.
      </Watermark>
    </Page>
  </>
);

export default App;
